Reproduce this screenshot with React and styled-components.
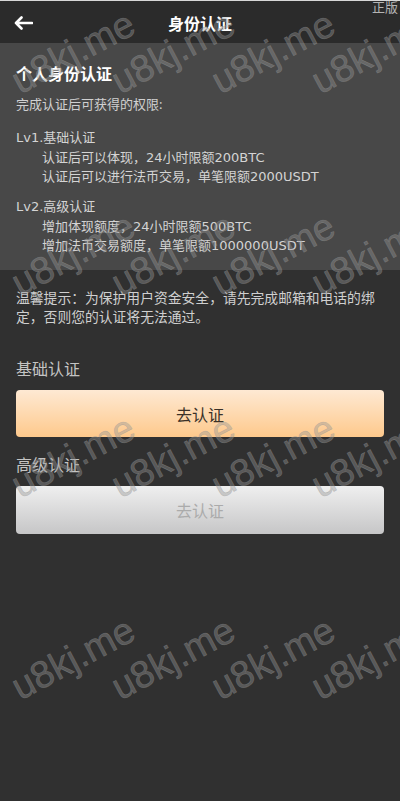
import React from "react";
import styled, { createGlobalStyle } from "styled-components";

const Global = createGlobalStyle`
  html, body { margin: 0; padding: 0; background: #303030; }
  body { font-family: "Noto Sans", "Noto Sans CJK SC", sans-serif; }
  * { box-sizing: border-box; }
`;

const Page = styled.div`
  position: relative;
  width: 400px;
  min-height: 801px;
  background: #303030;
  overflow: hidden;
  border-top: 1px solid #d8d8d8;
`;

const Header = styled.header`
  position: relative;
  height: 42px;
  background: #2b2b2b;
  display: flex;
  align-items: center;
  justify-content: center;
`;

const Back = styled.button`
  position: absolute;
  left: 12px;
  top: 12px;
  width: 22px;
  height: 20px;
  padding: 0;
  border: none;
  background: none;
  display: flex;
  align-items: center;
  justify-content: center;
`;

const Title = styled.h1`
  margin: 3px 0 0;
  font-size: 16px;
  font-weight: 700;
  color: #fff;
  line-height: 22px;
`;

const Corner = styled.span`
  position: absolute;
  top: -2px;
  right: 2px;
  font-size: 13px;
  line-height: 16px;
  color: #b4b4b4;
`;

const Info = styled.section`
  background: #484848;
  padding: 20px 16px 15px;
`;

const InfoTitle = styled.h2`
  margin: 0;
  font-size: 16px;
  font-weight: 700;
  line-height: 22px;
  color: #fff;
`;

const Sub = styled.p`
  margin: 9px 0 0;
  font-size: 13px;
  line-height: 20px;
  color: #d0d0d0;
`;

const Level = styled.div`
  margin-top: ${(p) => p.$gap}px;
  font-family: "DejaVu Sans", "Noto Sans CJK SC", sans-serif;
`;

const LevelName = styled.div`
  font-size: 13px;
  line-height: 20px;
  color: #d4d4d4;
`;

const LevelLine = styled.div`
  padding-left: 26px;
  font-size: 13px;
  line-height: 19px;
  color: #d4d4d4;
`;

const Body = styled.div`
  padding: 18px 16px 0;
`;

const Hint = styled.p`
  margin: 0;
  font-size: 13.8px;
  line-height: 19px;
  color: #cfcfcf;
  word-break: break-all;
`;

const Label = styled.div`
  margin-top: ${(p) => p.$gap}px;
  font-size: 16px;
  line-height: 22px;
  color: #c4c4c4;
`;

const Btn = styled.button`
  display: block;
  width: 100%;
  height: ${(p) => p.$h}px;
  margin-top: ${(p) => p.$gap}px;
  border: none;
  border-radius: 4px;
  font-family: inherit;
  font-size: 16px;
  color: ${(p) => (p.$disabled ? "#ababab" : "#3a3128")};
  background: ${(p) =>
    p.$disabled
      ? "linear-gradient(#efefef, #c6c6c7)"
      : "linear-gradient(#fee9d3, #fec98c)"};
`;

const Marks = styled.div`
  position: absolute;
  inset: 0;
  pointer-events: none;
  display: grid;
  grid-template-columns: repeat(4, 100px);
  grid-auto-rows: 202px;
  padding-left: 23px;
  margin-top: -50px;
`;

const Mark = styled.span`
  display: flex;
  align-items: center;
  justify-content: center;
  font-family: "Liberation Sans", Arial, sans-serif;
  font-size: 38px;
  color: rgba(150, 150, 150, 0.42);
  white-space: nowrap;
  -webkit-text-stroke: 0.6px rgba(150, 150, 150, 0.42);
  transform: rotate(-28deg);
`;

const marks = Array.from({ length: 20 }, (_, i) => i);

export default function App() {
  return (
    <>
      <Global />
      <Page>
        <Header>
          <Back aria-label="back">
            <svg width="20" height="14" viewBox="0 0 20 14">
              <path
                d="M19 7H3M8.5 1.5L3 7l5.5 5.5"
                fill="none"
                stroke="#fff"
                strokeWidth="2.6"
                strokeLinecap="round"
                strokeLinejoin="round"
              />
            </svg>
          </Back>
          <Title>身份认证</Title>
        </Header>
        <Info>
          <InfoTitle>个人身份认证</InfoTitle>
          <Sub>完成认证后可获得的权限:</Sub>
          <Level $gap={14}>
            <LevelName>Lv1.基础认证</LevelName>
            <LevelLine>认证后可以体现，24小时限额200BTC</LevelLine>
            <LevelLine>认证后可以进行法币交易，单笔限额2000USDT</LevelLine>
          </Level>
          <Level $gap={11}>
            <LevelName>Lv2.高级认证</LevelName>
            <LevelLine>增加体现额度，24小时限额500BTC</LevelLine>
            <LevelLine>增加法币交易额度，单笔限额1000000USDT</LevelLine>
          </Level>
        </Info>
        <Body>
          <Hint>温馨提示：为保护用户资金安全，请先完成邮箱和电话的绑定，否则您的认证将无法通过。</Hint>
          <Label $gap={32}>基础认证</Label>
          <Btn $gap={10} $h={47}>去认证</Btn>
          <Label $gap={17}>高级认证</Label>
          <Btn $gap={10} $h={48} $disabled>去认证</Btn>
        </Body>
        <Marks>
          {marks.map((i) => (
            <Mark key={i}>u8kj.me</Mark>
          ))}
        </Marks>
        <Corner>正版</Corner>
      </Page>
    </>
  );
}
